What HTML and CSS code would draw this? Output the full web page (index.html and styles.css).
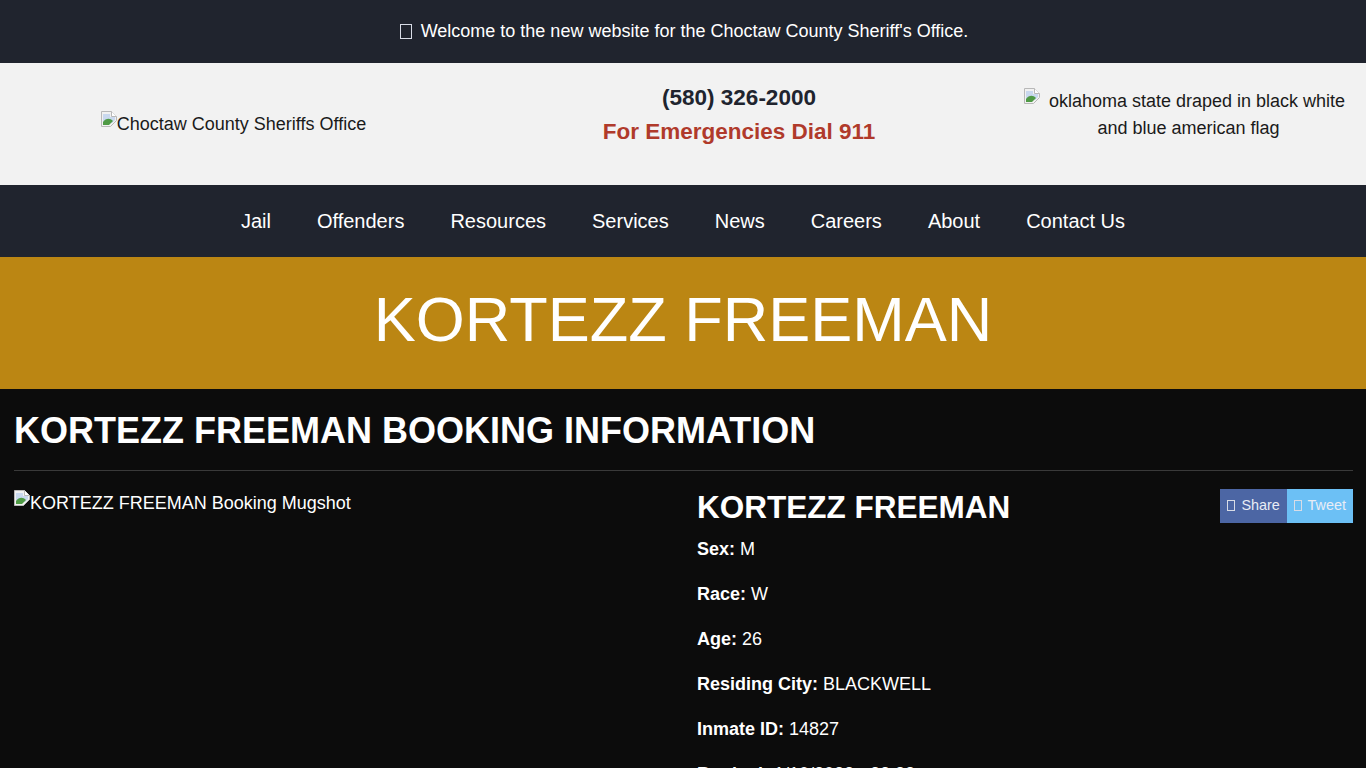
FILE: index.html
```html
<!DOCTYPE html>
<html lang="en">
<head>
    <meta charset="UTF-8">
    <meta name="viewport" content="width=device-width, initial-scale=1.0">
    <title>KORTEZZ FREEMAN</title>
    <link rel="stylesheet" href="styles.css">
</head>
<body>
    <div class="welcome"><span class="missing-glyph"></span> Welcome to the new website for the Choctaw County Sheriff's Office.</div>

    <header class="masthead">
        <div class="masthead-col">
            <span class="broken-img">
                <svg class="broken-icon" width="16" height="16" viewBox="0 0 16 16"><path d="M0.5 0.5H10.5L15.5 5.5V9.5L9.5 15.5H0.5Z" fill="#f1f1f1" stroke="#b8b8b8"/><path d="M10.5 0.5V5.5H15.5" fill="#fff" stroke="#b8b8b8"/><path d="M2 3H9V6H14V9L11 12H2Z" fill="#c9d8ee"/><path d="M2 14V11C5 7 9 7 12 10L8 14Z" fill="#4f9a45"/></svg>Choctaw County Sheriffs Office
            </span>
        </div>
        <div class="masthead-col contact">
            <div class="phone">(580) 326-2000</div>
            <div class="emergency">For Emergencies Dial 911</div>
        </div>
        <div class="masthead-col contact">
            <span class="broken-img flag-alt">
                <svg class="broken-icon flag-icon" width="16" height="16" viewBox="0 0 16 16"><path d="M0.5 0.5H10.5L15.5 5.5V9.5L9.5 15.5H0.5Z" fill="#f1f1f1" stroke="#b8b8b8"/><path d="M10.5 0.5V5.5H15.5" fill="#fff" stroke="#b8b8b8"/><path d="M2 3H9V6H14V9L11 12H2Z" fill="#c9d8ee"/><path d="M2 14V11C5 7 9 7 12 10L8 14Z" fill="#4f9a45"/></svg>
                oklahoma state draped in black white and blue american flag
            </span>
        </div>
    </header>

    <nav class="mainnav">
        <a href="#">Jail</a>
        <a href="#">Offenders</a>
        <a href="#">Resources</a>
        <a href="#">Services</a>
        <a href="#">News</a>
        <a href="#">Careers</a>
        <a href="#">About</a>
        <a href="#">Contact Us</a>
    </nav>

    <div class="banner"><h1>KORTEZZ FREEMAN</h1></div>

    <main class="content">
        <h2 class="page-title">KORTEZZ FREEMAN BOOKING INFORMATION</h2>
        <hr>
        <div class="booking">
            <div class="mugshot">
                <span class="broken-img">
                    <svg class="broken-icon" width="16" height="16" viewBox="0 0 16 16"><path d="M0.5 0.5H10.5L15.5 5.5V9.5L9.5 15.5H0.5Z" fill="#f1f1f1" stroke="#b8b8b8"/><path d="M10.5 0.5V5.5H15.5" fill="#fff" stroke="#b8b8b8"/><path d="M2 3H9V6H14V9L11 12H2Z" fill="#c9d8ee"/><path d="M2 14V11C5 7 9 7 12 10L8 14Z" fill="#4f9a45"/></svg>KORTEZZ FREEMAN Booking Mugshot
                </span>
            </div>
            <div class="details">
                <div class="share">
                    <a href="#" class="share-btn facebook"><span class="missing-glyph small"></span> Share</a>
                    <a href="#" class="share-btn twitter"><span class="missing-glyph small"></span> Tweet</a>
                </div>
                <h3 class="inmate-name">KORTEZZ FREEMAN</h3>
                <p><strong>Sex:</strong> M</p>
                <p><strong>Race:</strong> W</p>
                <p><strong>Age:</strong> 26</p>
                <p><strong>Residing City:</strong> BLACKWELL</p>
                <p><strong>Inmate ID:</strong> 14827</p>
                <p><strong>Booked:</strong> 1/10/2022 - 22:33</p>
            </div>
        </div>
    </main>
</body>
</html>
```

FILE: styles.css
```css
* {
    box-sizing: border-box;
}
html, body {
    height: 768px;
    overflow: hidden;
}
body {
    margin: 0;
    background-color: #0c0c0c;
    color: #fff;
    font-family: "Liberation Sans", Arial, sans-serif;
    font-size: 18px;
    line-height: 27px;
}
a {
    color: #fff;
    text-decoration: none;
}
.welcome {
    height: 63px;
    background-color: #20242e;
    text-align: center;
    padding: 18px 0 0 2px;
}
.missing-glyph {
    display: inline-block;
    width: 12px;
    height: 15px;
    border: 1px solid #d8dce6;
    margin-right: 4px;
    vertical-align: -2px;
}
.missing-glyph.small {
    width: 8px;
    height: 11px;
    margin-right: 2px;
    vertical-align: -1px;
}
.masthead {
    height: 122px;
    background-color: #f2f2f2;
    color: #1a1a1a;
    display: grid;
    grid-template-columns: 467px 1fr 355px;
    align-items: center;
    text-align: center;
}
.contact {
    padding-bottom: 18px;
}
.broken-icon {
    vertical-align: 3px;
}
.flag-alt {
    display: block;
    width: 330px;
    margin: 0 auto;
}
.flag-icon {
    margin: 0 4px 0 -8px;
}
.phone {
    font-size: 22.5px;
    font-weight: bold;
    color: #20242e;
    line-height: 34px;
}
.emergency {
    font-size: 22.5px;
    font-weight: bold;
    color: #b03a2b;
    line-height: 34px;
}
.mainnav {
    height: 72px;
    background-color: #20242e;
    display: flex;
    justify-content: center;
    align-items: center;
    gap: 46px;
    font-size: 20px;
}
.banner {
    height: 132px;
    background-color: #bb8613;
    display: flex;
    justify-content: center;
    align-items: center;
    padding-bottom: 8px;
}
.banner h1 {
    margin: 0;
    font-size: 63px;
    font-weight: normal;
    line-height: 76px;
}
.content {
    padding: 20px 13px 0 14px;
}
.page-title {
    margin: 0;
    font-size: 36px;
    line-height: 43px;
}
hr {
    border: 0;
    border-top: 1px solid #3a3a3a;
    margin: 18px 0;
}
.booking {
    display: grid;
    grid-template-columns: 683px 1fr;
}
.mugshot {
    padding-top: 1px;
}
.inmate-name {
    margin: 0 0 11px;
    font-size: 31.5px;
    line-height: 36px;
}
.details p {
    margin: 0 0 18px;
}
.share {
    float: right;
    display: flex;
}
.share-btn {
    height: 34px;
    padding: 0 7px;
    font-size: 14.4px;
    line-height: 32px;
    color: #e8edf5;
}
.facebook {
    background-color: #4c66a4;
}
.twitter {
    background-color: #6cc0f5;
}
```
